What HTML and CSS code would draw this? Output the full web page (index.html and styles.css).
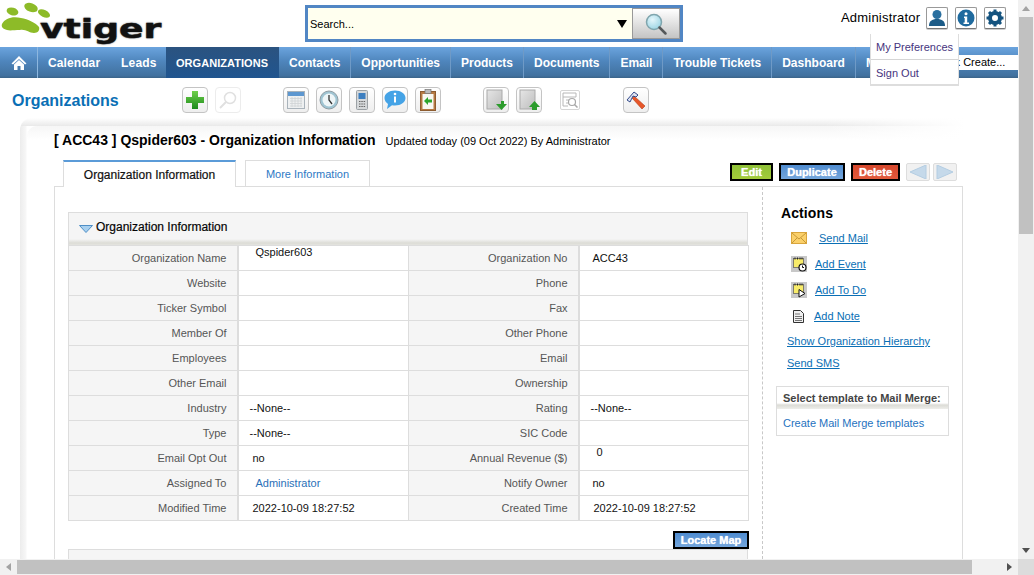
FILE: index.html
```html
<!DOCTYPE html>
<html lang="en">
<head>
<meta charset="utf-8">
<title>Organizations</title>
<link rel="stylesheet" href="styles.css">
</head>
<body>
<svg class="defs" width="0" height="0" aria-hidden="true">
  <defs>
    <linearGradient id="gGreen" x1="0" y1="0" x2="0" y2="1"><stop offset="0" stop-color="#6fd04a"/><stop offset="1" stop-color="#1c8a1c"/></linearGradient>
    <linearGradient id="gPage" x1="0" y1="0" x2="1" y2="1"><stop offset="0" stop-color="#e6e6e6"/><stop offset="1" stop-color="#bdbdbd"/></linearGradient>
    <radialGradient id="gLens" cx="0.4" cy="0.35" r="0.8"><stop offset="0" stop-color="#e4f6fb"/><stop offset="1" stop-color="#8fcfe0"/></radialGradient>
  </defs>
</svg>
<div class="shell">
  <main class="page">
    <header class="top">
      <div class="logo">
        <svg class="paw" width="52" height="42" viewBox="0 0 52 42">
          <path fill="#8dbb28" d="M2 24c3-6 11-8 19-6 7 1 15 5 18 9 1 3-1 6-5 6-5 0-8-4-14-3-6 0-10 1-13 0-4-1-6-3-5-6z"/>
          <ellipse fill="#8dbb28" cx="12.500" cy="11.500" rx="6" ry="3.800" transform="rotate(15 12.500 11.500)"/>
          <ellipse fill="#8dbb28" cx="31" cy="7.500" rx="7" ry="4.300" transform="rotate(20 31 7.500)"/>
          <ellipse fill="#8dbb28" cx="44" cy="13.500" rx="6.500" ry="3.500" transform="rotate(25 44 13.500)"/>
        </svg>
        <span class="logo-text">vtiger</span>
      </div>
      <form class="search">
        <span class="search-field">Search...</span>
        <span class="search-caret"></span>
        <span class="search-btn">
          <svg width="24" height="24" viewBox="0 0 24 24"><circle cx="10" cy="10" r="7.500" fill="url(#gLens)" stroke="#7fa5ad" stroke-width="1.500"/><path d="M15.500 15.500l6 6" stroke="#55585a" stroke-width="2.500" stroke-linecap="round"/></svg>
        </span>
      </form>
      <div class="user">
        <span class="user-name">Administrator</span>
        <span class="user-btn">
          <svg width="18" height="18" viewBox="0 0 18 18"><circle cx="9" cy="5.500" r="4.500" fill="#2a6f9f"/><path d="M1 17c0-5 3-7 8-7s8 2 8 7z" fill="#1d5c88"/></svg>
        </span>
        <span class="user-btn">
          <svg width="18" height="18" viewBox="0 0 18 18"><circle cx="9" cy="9" r="8.500" fill="#1f6a9e"/><circle cx="9" cy="4.800" r="1.500" fill="#fff"/><path d="M7 7.500h3.200v6H12V15H6.500v-1.500h1.200V9H7z" fill="#fff"/></svg>
        </span>
        <span class="user-btn">
          <svg width="18" height="18" viewBox="0 0 18 18"><circle cx="9" cy="9" r="5" fill="none" stroke="#14537f" stroke-width="4"/><path d="M9 0.500v4M9 13.500v4M0.500 9h4M13.500 9h4M3 3l3 3M12 12l3 3M15 3l-3 3M6 12l-3 3" stroke="#14537f" stroke-width="3"/></svg>
        </span>
      </div>
    </header>

    <nav class="nav">
      <a class="nav-item nav-home">
        <svg width="16" height="16" viewBox="0 0 16 16"><path d="M8 1L0.500 8.500 2 9.500 8 4l6 5.500 1.500-1z" fill="#fff"/><path d="M3 9.500L8 5l5 4.500V15H9.500v-4h-3v4H3z" fill="#fff"/></svg>
      </a>
      <a class="nav-item nav-cal">Calendar</a>
      <a class="nav-item nav-leads">Leads</a>
      <a class="nav-item nav-active">ORGANIZATIONS</a>
      <a class="nav-item nav-sep">Contacts</a>
      <a class="nav-item nav-sep">Opportunities</a>
      <a class="nav-item nav-sep">Products</a>
      <a class="nav-item nav-sep">Documents</a>
      <a class="nav-item nav-sep">Email</a>
      <a class="nav-item nav-sep">Trouble Tickets</a>
      <a class="nav-item nav-sep">Dashboard</a>
      <a class="nav-item nav-more">More</a>
      <span class="quick">Quick Create...</span>
    </nav>

    <div class="menu">
      <a class="menu-item">My Preferences</a>
      <a class="menu-item">Sign Out</a>
    </div>

    <div class="toolbar">
      <h1 class="module">Organizations</h1>
      <div class="tools tools-a">
        <span class="tool"><svg width="18" height="18" viewBox="0 0 18 18"><path d="M6 0h6v6h6v6h-6v6H6v-6H0V6h6z" fill="url(#gGreen)"/></svg></span>
        <span class="tool tool-off"><svg width="18" height="18" viewBox="0 0 18 18"><circle cx="11" cy="7" r="5.500" fill="none" stroke="#e0e0e0" stroke-width="1.500"/><path d="M7 11l-6 6" stroke="#e0e0e0" stroke-width="2"/></svg></span>
      </div>
      <div class="tools tools-b">
        <span class="tool"><svg width="18" height="18" viewBox="0 0 18 18"><rect x="0.500" y="0.500" width="17" height="17" fill="#eef0f1" stroke="#a9b3bb"/><rect x="1" y="1" width="16" height="4" fill="#5d97d0"/><path d="M3 7.500h12M3 10h12M3 12.500h12M3 15h12M5 6v10M8 6v10M11 6v10M14 6v10" stroke="#cfd3d6" stroke-width="0.800"/></svg></span>
        <span class="tool"><svg width="20" height="20" viewBox="0 0 20 20"><circle cx="10" cy="10" r="9" fill="#9fc4d2" stroke="#8f9ca3"/><circle cx="10" cy="10" r="6.500" fill="#eef5f7"/><path d="M10 5v5l3 4" fill="none" stroke="#333" stroke-width="1.300"/></svg></span>
        <span class="tool"><svg width="12" height="20" viewBox="0 0 12 20"><rect x="0.500" y="0.500" width="11" height="19" rx="1" fill="#d5d8da" stroke="#9ba1a5"/><rect x="2.500" y="3" width="7" height="6" fill="#3d7fc0"/><path d="M3 11.500h1.500M5.300 11.500h1.500M7.600 11.500h1.500M3 14h1.500M5.300 14h1.500M7.600 14h1.500M3 16.500h1.500M5.300 16.500h1.500M7.600 16.500h1.500" stroke="#666" stroke-width="1.200"/></svg></span>
        <span class="tool"><svg width="22" height="20" viewBox="0 0 22 20"><path d="M11 0.500c6 0 10.500 3.300 10.500 7.500S17 15.500 11 15.500c-1 0-2 0-3-.3L3 19l1-5C2 12.500.500 10.500.500 8 .500 3.800 5 .500 11 .500z" fill="#45a3e6"/><circle cx="11" cy="4" r="1.300" fill="#fff"/><rect x="10" y="6.500" width="2" height="6" fill="#fff"/></svg></span>
        <span class="tool"><svg width="16" height="22" viewBox="0 0 16 22"><rect x="0.500" y="2.500" width="15" height="19" fill="#b67a43" stroke="#8d5c30"/><rect x="2.500" y="5" width="11" height="15" fill="#f8f8f2"/><rect x="5" y="0.500" width="6" height="4" fill="#bbb" stroke="#777" stroke-width="0.700"/><path d="M4 12l4-4v2.500h4v3H8V16z" fill="#2da52d"/></svg></span>
      </div>
      <div class="tools tools-c">
        <span class="tool"><svg width="22" height="22" viewBox="0 0 22 22"><rect x="2" y="1" width="15" height="19" fill="url(#gPage)" stroke="#aaa"/><path d="M11 15h5v-3h3v3h3l-5.500 6z" fill="#2c9c2c"/></svg></span>
        <span class="tool"><svg width="22" height="22" viewBox="0 0 22 22"><rect x="2" y="1" width="15" height="19" fill="url(#gPage)" stroke="#aaa"/><path d="M16.500 12l5.500 6h-3v3h-5v-3h-3z" fill="#2c9c2c"/></svg></span>
      </div>
      <span class="tool-flat"><svg width="16" height="16" viewBox="0 0 16 16"><path d="M1 1h13v4H1zM1 5v9h5M4 8h3M4 11h2" fill="none" stroke="#b8b8b8"/><circle cx="10" cy="10" r="3.500" fill="none" stroke="#a8a8a8" stroke-width="1.200"/><path d="M12.500 12.500l3 3" stroke="#a8a8a8" stroke-width="1.500"/></svg></span>
      <span class="tool tool-last"><svg width="22" height="22" viewBox="0 0 22 22"><path d="M9 7l11 10-3 3L7 9z" fill="#e8572a" stroke="#b03d16" stroke-width="0.600"/><path d="M2 11l7-8 4 3-2 2-3-1-3 6z" fill="#dfe4f2" stroke="#334a8a"/></svg></span>
    </div>

    <section class="card">
      <div class="card-head">
        <span class="card-title">[ ACC43 ] Qspider603 - Organization Information</span>
        <span class="card-sub">Updated today (09 Oct 2022) By Administrator</span>
      </div>
      <div class="tabbar">
        <span class="tab tab-on">Organization Information</span>
        <span class="tab tab-off">More Information</span>
        <div class="actions-row">
          <a class="btn btn-green">Edit</a>
          <a class="btn btn-blue btn-dup">Duplicate</a>
          <a class="btn btn-red">Delete</a>
          <span class="pager">
            <svg width="18" height="14" viewBox="0 0 18 14"><path d="M17 0v14L1 7z" fill="#c5d9ea" stroke="#b4cde2"/></svg>
          </span>
          <span class="pager">
            <svg width="18" height="14" viewBox="0 0 18 14"><path d="M1 0v14l16-7z" fill="#c5d9ea" stroke="#b4cde2"/></svg>
          </span>
        </div>
      </div>
      <div class="panel">
        <div class="panel-main">
          <div class="section-head">
            <svg width="14" height="8" viewBox="0 0 14 8"><path d="M0.500 0.500h13L7 7.500z" fill="#a8d0ef" stroke="#4f8fc6"/></svg>
            <span>Organization Information</span>
          </div>
          <table class="info">
            <colgroup><col class="c-l1"><col class="c-v1"><col class="c-l2"><col class="c-v2"></colgroup>
            <tbody>
              <tr><th>Organization Name</th><td><span class="v-in v-up">Qspider603</span></td><th>Organization No</th><td><span class="v-acc">ACC43</span></td></tr>
              <tr><th>Website</th><td></td><th>Phone</th><td></td></tr>
              <tr><th>Ticker Symbol</th><td></td><th>Fax</th><td></td></tr>
              <tr><th>Member Of</th><td></td><th>Other Phone</th><td></td></tr>
              <tr><th>Employees</th><td></td><th>Email</th><td></td></tr>
              <tr><th>Other Email</th><td></td><th>Ownership</th><td></td></tr>
              <tr><th>Industry</th><td>--None--</td><th>Rating</th><td>--None--</td></tr>
              <tr><th>Type</th><td>--None--</td><th>SIC Code</th><td></td></tr>
              <tr><th>Email Opt Out</th><td><span class="v-no">no</span></td><th>Annual Revenue ($)</th><td><span class="v-zero v-up">0</span></td></tr>
              <tr><th>Assigned To</th><td><a class="v-in v-link">Administrator</a></td><th>Notify Owner</th><td><span class="v-acc">no</span></td></tr>
              <tr><th>Modified Time</th><td><span class="v-date">2022-10-09 18:27:52</span></td><th>Created Time</th><td><span class="v-date">2022-10-09 18:27:52</span></td></tr>
            </tbody>
          </table>
          <div class="map-row"><a class="btn btn-blue btn-map">Locate Map</a></div>
          <div class="section-next"></div>
        </div>
        <aside class="side">
          <h2 class="side-title">Actions</h2>
          <ul class="side-list">
            <li class="side-row row-mail">
              <svg width="16" height="12" viewBox="0 0 16 12"><rect x="0.500" y="0.500" width="15" height="11" fill="#fbd06a" stroke="#d9a53c"/><path d="M1 1l7 6 7-6M1 11l5-5M15 11l-5-5" fill="none" stroke="#b98a2a" stroke-width="0.800"/></svg>
              <a>Send Mail</a>
            </li>
            <li class="side-row row-event">
              <svg width="16" height="16" viewBox="0 0 16 16"><rect width="16" height="16" fill="#c8c8c8"/><rect x="2.500" y="2.500" width="10" height="9" fill="#f8ec6a" stroke="#555" stroke-width="0.700"/><path d="M4 1.500v2M6.500 1.500v2M9 1.500v2M11 1.500v2" stroke="#222"/><circle cx="11.500" cy="11.500" r="3.500" fill="#fff" stroke="#111" stroke-width="1.200"/><path d="M11.500 9.500v2h1.500" fill="none" stroke="#111"/></svg>
              <a>Add Event</a>
            </li>
            <li class="side-row row-todo">
              <svg width="16" height="16" viewBox="0 0 16 16"><rect width="16" height="16" fill="#c8c8c8"/><rect x="2.500" y="2.500" width="10" height="9" fill="#f8ec6a" stroke="#555" stroke-width="0.700"/><path d="M4 1.500v2M6.500 1.500v2M9 1.500v2M11 1.500v2" stroke="#222"/><path d="M8 7.500l6 4-6 3.500z" fill="#fff" stroke="#111"/></svg>
              <a>Add To Do</a>
            </li>
            <li class="side-row row-note">
              <svg width="11" height="13" viewBox="0 0 11 13"><path d="M0.500 0.500h7l3 3v9h-10z" fill="#f0f0f0" stroke="#333"/><path d="M2 4h5M2 6.500h7M2 8.500h7M2 10.500h7" stroke="#555" stroke-width="0.800"/></svg>
              <a>Add Note</a>
            </li>
          </ul>
          <a class="side-link link-tree">Show Organization Hierarchy</a>
          <a class="side-link link-sms">Send SMS</a>
          <div class="merge">
            <div class="merge-head">Select template to Mail Merge:</div>
            <a class="merge-link">Create Mail Merge templates</a>
          </div>
        </aside>
      </div>
    </section>
  </main>

  <div class="vbar">
    <span class="arrow arrow-up"></span>
    <span class="vthumb"></span>
    <span class="arrow arrow-down"></span>
  </div>
  <div class="hbar">
    <span class="arrow arrow-left"></span>
    <span class="hthumb"></span>
    <span class="arrow arrow-right"></span>
  </div>
  <div class="corner"></div>
</div>
</body>
</html>
```

FILE: styles.css
```css
* { box-sizing: border-box; }
html, body { margin: 0; height: 100%; overflow: hidden; }
body { background: #fff; font-family: "Liberation Sans", Arial, sans-serif; font-size: 11px; color: #000; }
.defs { position: absolute; }
a { cursor: pointer; }

.shell { display: grid; grid-template-columns: 1018px 16px; grid-template-rows: 559px 16px; width: 1034px; height: 575px; }
.page { position: relative; overflow: hidden; background: #fff; }

/* header */
.top { display: flex; height: 47px; align-items: flex-start; }
.logo { position: relative; width: 305px; height: 47px; flex: none; }
.paw { position: absolute; left: 0; top: 0; }
.logo-text { position: absolute; left: 40px; top: 6px; font: bold 26px/46px "DejaVu Sans", sans-serif; color: #111; -webkit-text-stroke: 0.400px #111; text-shadow: 0 0 1.500px #333; transform: scaleX(1.39); transform-origin: left center; }
.search { display: flex; align-items: center; width: 378px; height: 37px; margin-top: 5px; border: 3px solid #5186c4; background: #ffffef; }
.search-field { flex: 1; padding-left: 2px; font-size: 11px; }
.search-caret { width: 0; height: 0; margin-right: 5px; border-left: 5px solid transparent; border-right: 5px solid transparent; border-top: 8px solid #000; }
.search-btn { display: flex; align-items: center; justify-content: center; width: 48px; height: 31px; background: linear-gradient(#fff, #c4c4c4); border: 1px solid #999; }
.user { display: flex; align-items: center; margin-left: 158px; margin-top: 7px; }
.user-name { margin-right: 6px; font-size: 13px; line-height: 20px; letter-spacing: 0.200px; }
.user-btn { display: flex; align-items: center; justify-content: center; width: 22px; height: 22px; margin-right: 7px; border: 1px solid #999; border-bottom-color: #777; border-radius: 2px; background: #fff; box-shadow: 0 1px 0 #ccc; }

/* nav */
.nav { display: flex; position: relative; height: 31px; background: linear-gradient(#6ba4de 0, #4f86bd 45%, #41719f 92%, #3b6489 100%); }
.nav-item { display: flex; align-items: center; height: 31px; font-size: 12px; font-weight: bold; color: #fff; white-space: nowrap; }
.nav-home { justify-content: center; width: 38px; border-right: 1px solid #8db7df; }
.nav-cal { width: 73px; padding-left: 10px; letter-spacing: 0.100px; }
.nav-leads { width: 55px; padding-left: 10px; letter-spacing: 0.200px; }
.nav-active { width: 113px; padding-left: 10px; background: linear-gradient(#2b5380, #20558f); font-size: 11px; letter-spacing: 0.050px; }
.nav-sep { padding: 0 10px; border-right: 1px solid #6f9ac6; }
.nav-more { padding-left: 10px; }
.quick { position: absolute; top: 8px; right: 0; width: 89px; height: 15px; padding-left: 3px; background: #fff; color: #000; font-size: 11px; line-height: 15px; white-space: nowrap; }

.menu { position: absolute; left: 870px; top: 34px; z-index: 5; width: 89px; height: 52px; background: #fff; border: 1px solid #ddd; border-bottom-width: 2px; border-top: 0; }
.menu-item { display: block; height: 26px; padding: 0 5px; color: #46347e; font-size: 11px; line-height: 26px; white-space: nowrap; }
.menu-item:first-child { border-bottom: 1px solid #d5d5d5; }

/* toolbar */
.toolbar { display: flex; align-items: center; height: 44px; padding: 0 0 0 12px; }
.module { width: 170px; margin: 0; padding-top: 2px; font-size: 16px; font-weight: bold; color: #0a6fb5; flex: none; }
.tools { display: flex; gap: 7px; flex: none; }
.tools-b { margin-left: 42px; }
.tools-c { margin-left: 42px; }
.tool { display: flex; align-items: center; justify-content: center; width: 26px; height: 26px; flex: none; border: 1px solid #c4c4c4; border-radius: 4px; background: linear-gradient(#fff, #eee); }
.tool-off { border-color: #ececec; background: #fff; }
.tool-flat { display: flex; align-items: center; justify-content: center; width: 20px; height: 20px; margin-left: 18px; border: 1px solid #d5d5d5; border-radius: 2px; flex: none; }
.tool-last { margin-left: 43px; }

/* card */
.card { position: relative; margin: -4px 0 0 20px; width: 945px; height: 490px; padding: 8px 0 0 7px; background: linear-gradient(90deg, rgba(255,255,255,0) 85%, #fff 100%), linear-gradient(#fff 0, #e9e9e9 8px, rgba(255,255,255,0) 8px), linear-gradient(90deg, #ececec 0, #f7f7f7 6px, #fff 7px); border-top-left-radius: 12px; }
.card-head { display: flex; align-items: baseline; height: 34px; padding: 6px 0 0 27px; border-top-left-radius: 10px; background: linear-gradient(90deg, rgba(255,255,255,0) 85%, #fff 100%), linear-gradient(#f6f6f6, #fff 14px); }
.card-title { font-size: 14px; font-weight: bold; white-space: nowrap; }
.card-sub { margin-left: 10px; font-size: 11px; white-space: nowrap; }
.tabbar { display: flex; align-items: flex-end; height: 26px; margin-left: 36px; }
.tab { display: flex; align-items: center; justify-content: center; height: 26px; background: #fff; white-space: nowrap; font-size: 11px; }
.tab-on { width: 173px; border: 1px solid #ddd; border-top: 2px solid #5b9bd8; border-bottom: 0; font-size: 12px; font-weight: normal; color: #111; -webkit-text-stroke: 0.200px #111; position: relative; z-index: 1; margin-bottom: -1px; height: 27px; }
.tab-off { width: 125px; margin-left: 9px; border: 1px solid #ddd; border-bottom: 0; color: #2d79c4; }
.actions-row { display: flex; align-items: center; align-self: flex-start; margin-left: 360px; margin-top: 3px; }
.btn { display: inline-flex; align-items: center; justify-content: center; height: 18px; border: 2px solid #000; color: #fff; font-size: 11px; font-weight: bold; white-space: nowrap; text-shadow: 0 0 1px #fff; }
.btn-green { width: 43px; background: linear-gradient(#8fc137, #a3cb3a); }
.btn-blue { background: linear-gradient(#4f8cd0, #74a6dc); }
.btn-dup { width: 66px; margin-left: 6px; }
.btn-red { width: 49px; margin-left: 6px; background: linear-gradient(#d6472c, #e25a3c); }
.pager { display: flex; align-items: center; justify-content: center; width: 24px; height: 18px; margin-left: 6px; background: #f1f1f1; border: 1px solid #ddd; border-radius: 2px; }
.pager + .pager { margin-left: 3px; width: 24px; }

.panel { display: flex; width: 909px; height: 373px; margin-left: 27px; border: 1px solid #ddd; border-bottom: 0; }
.panel-main { width: 708px; padding: 25px 13px 0 13px; border-right: 1px dashed #c8c8c8; flex: none; }
.section-head { display: flex; align-items: center; gap: 3px; width: 680px; height: 33px; padding: 0 0 4px 10px; border: 1px solid #ddd; border-bottom: 0; background: linear-gradient(#f5f5f5 0, #f5f5f5 26px, #dcdcd6 30px, #e8e8e4 33px); font-size: 12px; -webkit-text-stroke: 0.200px #111; }
.section-head svg { margin-top: 3px; }
.info { width: 680px; border-collapse: collapse; table-layout: fixed; font-size: 11px; }
.c-l1 { width: 169px; }
.c-v1 { width: 171px; }
.c-l2 { width: 170px; }
.c-v2 { width: 170px; }
.info tr { height: 25px; }
.info th { padding: 0 10px 0 0; border: 1px solid #ddd; border-right-width: 2px; background: #f5f5f5; color: #555; text-align: right; font-weight: normal; }
.info td { padding: 0 0 0 11px; border: 1px solid #ddd; color: #111; white-space: nowrap; }
.v-in { margin-left: 6px; }
.v-up { position: relative; top: -6px; }
.v-link { color: #2a70b8; }
.v-acc { margin-left: 2px; }
.v-no { margin-left: 3px; }
.v-zero { margin-left: 6px; }
.v-date { margin-left: 3px; }
.map-row { display: flex; justify-content: flex-end; width: 681px; margin-top: 10px; }
.btn-map { width: 76px; }
.section-next { width: 680px; height: 20px; border: 1px solid #ddd; background: #f5f5f5; }

/* sidebar */
.side { flex: 1; padding: 17px 0 0 13px; }
.side-title { margin: 0 0 0 5px; font-size: 14px; font-weight: bold; line-height: 19px; letter-spacing: 0.100px; }
.side-list { list-style: none; margin: 2px 0 0; padding: 0; }
.side-row { display: flex; align-items: center; height: 26px; padding-left: 15px; }
.side-row a, .side-link { color: #0a6fb5; text-decoration: underline; font-size: 11px; }
.row-mail a { margin-left: 12px; }
.row-event a, .row-todo a { margin-left: 8px; }
.row-note { padding-left: 17px; }
.row-note a { margin-left: 10px; }
.side-link { display: block; margin-left: 11px; white-space: nowrap; }
.link-tree { margin-top: 6px; line-height: 13px; }
.link-sms { margin-top: 9px; line-height: 13px; }
.merge { width: 173px; height: 50px; margin-top: 16px; border: 1px solid #ddd; }
.merge-head { height: 22px; padding: 5px 0 0 6px; background: linear-gradient(#fff 0, #fff 16px, #dcdcd6 18px, #eeeeea 22px); color: #444; font-size: 11px; font-weight: bold; white-space: nowrap; }
.merge-link { display: block; padding: 8px 0 0 6px; color: #1f72c0; font-size: 11px; white-space: nowrap; }

/* scrollbars */
.vbar { display: flex; flex-direction: column; align-items: center; background: #f1f1f1; padding-top: 6px; }
.vthumb { width: 14px; height: 217px; margin-top: 6px; background: #c1c1c1; }
.hbar { display: flex; align-items: center; background: #f1f1f1; padding-left: 6px; }
.hthumb { width: 955px; height: 14px; margin-left: 6px; background: #c1c1c1; }
.corner { background: #dcdcdc; }
.arrow { width: 0; height: 0; flex: none; }
.arrow-up { border-left: 4px solid transparent; border-right: 4px solid transparent; border-bottom: 5px solid #a3a3a3; }
.arrow-down { margin-top: auto; margin-bottom: 6px; border-left: 4px solid transparent; border-right: 4px solid transparent; border-top: 5px solid #505050; }
.arrow-left { border-top: 4px solid transparent; border-bottom: 4px solid transparent; border-right: 5px solid #a3a3a3; }
.arrow-right { margin-left: auto; margin-right: 6px; border-top: 4px solid transparent; border-bottom: 4px solid transparent; border-left: 5px solid #505050; }
```
